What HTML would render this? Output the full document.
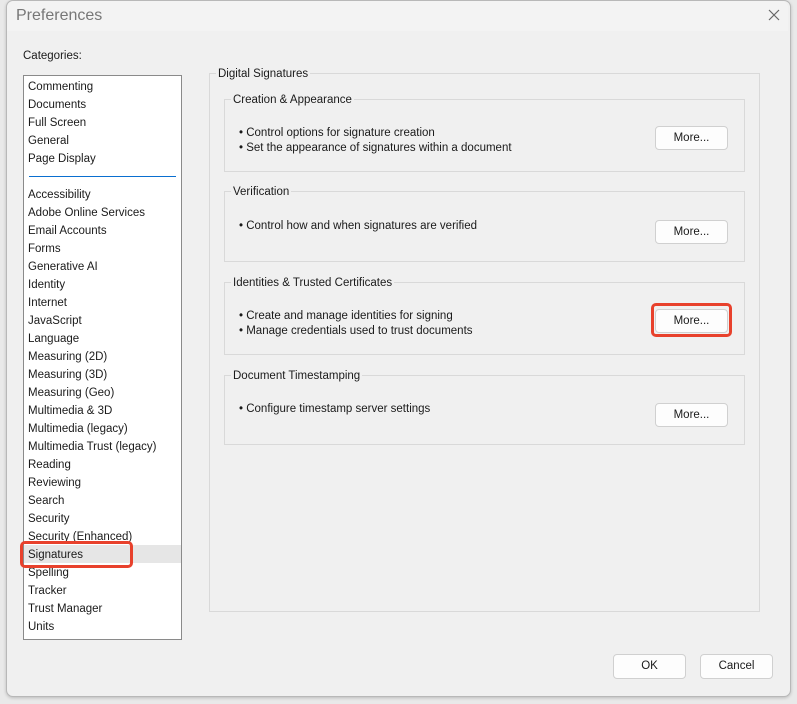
<!DOCTYPE html><html><head><style>
body{margin:0;width:797px;height:704px;background:#e9e9e9;font-family:"Liberation Sans",sans-serif;font-size:11.5px;color:#1a1a1a;position:relative;overflow:hidden}
.a{position:absolute}
.dlg{left:6px;top:0;width:783px;height:695px;background:#f0f0f0;border:1px solid #b8b8b8;border-radius:7px;box-shadow:0 1px 3px rgba(0,0,0,.2)}
.fs{border:1px solid #d9d9d9}
.lbl{background:#f0f0f0;padding:0 2px;line-height:14px}
.btn{background:#fdfdfd;border:1px solid #d0d0d0;border-radius:4px;text-align:center;line-height:22px;font-size:11.5px}
.red{border:3px solid #e8412c;border-radius:5px}
.it{left:28px;line-height:18px}
</style></head><body>
<div class="a dlg"></div>
<div class="a" style="left:7px;top:1px;width:781px;height:30px;background:#f3f3f3;border-radius:7px 7px 0 0"></div>
<div class="a" style="left:16px;top:7px;font-size:16px;color:#777">Preferences</div>
<svg class="a" style="left:768px;top:9px" width="12" height="12"><path d="M1 1L11 11M11 1L1 11" stroke="#666" stroke-width="1.2"/></svg>
<div class="a" style="left:23px;top:50px">Categories:</div>
<div class="a" style="left:23px;top:75px;width:157px;height:563px;background:#fff;border:1px solid #8a8a8a"></div>
<div class="a" style="left:29px;top:176px;width:147px;height:1px;background:#0a6fd0"></div>
<div class="a" style="left:24px;top:545px;width:157px;height:18px;background:#e6e6e6"></div>
<div class="a it" style="top:78px">Commenting<br>Documents<br>Full Screen<br>General<br>Page Display</div>
<div class="a it" style="top:186px">Accessibility<br>Adobe Online Services<br>Email Accounts<br>Forms<br>Generative AI<br>Identity<br>Internet<br>JavaScript<br>Language<br>Measuring (2D)<br>Measuring (3D)<br>Measuring (Geo)<br>Multimedia &amp; 3D<br>Multimedia (legacy)<br>Multimedia Trust (legacy)<br>Reading<br>Reviewing<br>Search<br>Security<br>Security (Enhanced)<br>Signatures<br>Spelling<br>Tracker<br>Trust Manager<br>Units</div>
<div class="a red" style="left:20px;top:541px;width:107px;height:21px"></div>

<div class="a fs" style="left:209px;top:73px;width:549px;height:537px"></div>
<div class="a lbl" style="left:216px;top:67px">Digital Signatures</div>

<div class="a fs" style="left:224px;top:99px;width:519px;height:71px"></div>
<div class="a lbl" style="left:231px;top:93px">Creation &amp; Appearance</div>
<div class="a" style="left:239px;top:126px;line-height:15px">• Control options for signature creation<br>• Set the appearance of signatures within a document</div>
<div class="a btn" style="left:655px;top:126px;width:71px;height:22px">More...</div>

<div class="a fs" style="left:224px;top:191px;width:519px;height:69px"></div>
<div class="a lbl" style="left:231px;top:185px">Verification</div>
<div class="a" style="left:239px;top:219px;line-height:15px">• Control how and when signatures are verified</div>
<div class="a btn" style="left:655px;top:220px;width:71px;height:22px">More...</div>

<div class="a fs" style="left:224px;top:282px;width:519px;height:71px"></div>
<div class="a lbl" style="left:231px;top:276px">Identities &amp; Trusted Certificates</div>
<div class="a" style="left:239px;top:309px;line-height:15px">• Create and manage identities for signing<br>• Manage credentials used to trust documents</div>
<div class="a btn" style="left:655px;top:309px;width:71px;height:22px">More...</div>
<div class="a red" style="left:651px;top:303px;width:75px;height:28px"></div>

<div class="a fs" style="left:224px;top:375px;width:519px;height:68px"></div>
<div class="a lbl" style="left:231px;top:369px">Document Timestamping</div>
<div class="a" style="left:239px;top:402px;line-height:15px">• Configure timestamp server settings</div>
<div class="a btn" style="left:655px;top:403px;width:71px;height:22px">More...</div>

<div class="a btn" style="left:613px;top:654px;width:71px;height:23px">OK</div>
<div class="a btn" style="left:700px;top:654px;width:71px;height:23px">Cancel</div>
</body></html>
